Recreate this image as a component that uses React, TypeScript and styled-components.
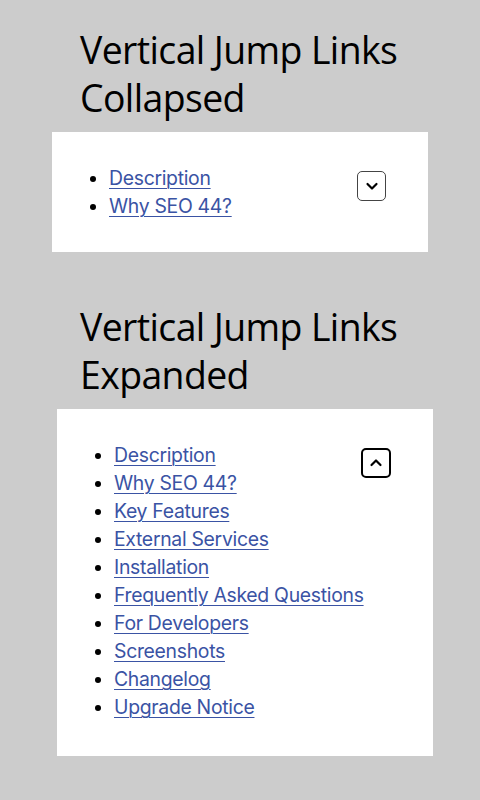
import React from "react"
import styled, { createGlobalStyle } from "styled-components"

const GlobalStyle = createGlobalStyle`
  html, body {
    margin: 0;
    padding: 0;
    background: #cccccc;
  }
`

const Page = styled.div`
  width: 480px;
  min-height: 800px;
  padding: 26px 0 0 52px;
  box-sizing: border-box;
  background: #cccccc;
`

const Title = styled.h2<{ $gap: number }>`
  margin: ${(p) => p.$gap}px 0 10px 28px;
  font-family: "Open Sans", "Liberation Sans", sans-serif;
  font-weight: 400;
  font-size: 37.4px;
  line-height: 48px;
  letter-spacing: -0.6px;
  color: #000;
`

const Panel = styled.div<{ $shift: number; $bottom: number }>`
  display: flex;
  align-items: flex-start;
  justify-content: space-between;
  width: 376px;
  margin-left: ${(p) => p.$shift}px;
  padding: 32px 42px ${(p) => p.$bottom}px 17px;
  box-sizing: border-box;
  background: #fff;
`

const List = styled.ul`
  flex: 1;
  min-width: 0;
  margin: 0;
  padding-left: 40px;
  font-family: Inter, "Noto Sans", sans-serif;
  font-size: 19.4px;
  line-height: 28px;
  color: #000;
`

const Item = styled.li`
  letter-spacing: -0.3px;
  white-space: nowrap;
`

const Link = styled.a`
  color: #3a53a4;
  text-decoration: underline;
  text-underline-offset: 3px;
  text-decoration-thickness: 1px;
`

const Toggle = styled.button<{ $open: boolean }>`
  flex: none;
  display: flex;
  align-items: center;
  justify-content: center;
  width: ${(p) => (p.$open ? 30 : 29)}px;
  height: 30px;
  margin-top: 7px;
  padding: 0;
  background: #fff;
  border: ${(p) => (p.$open ? "2px solid #000" : "1.5px solid #444")};
  border-radius: 5px;
  cursor: pointer;
`

const Chevron = ({ up }: { up: boolean }) => (
  <svg width="14" height="14" viewBox="0 0 14 14" fill="none">
    <path
      d={up ? "M2.5 9 L7 4.5 L11.5 9" : "M2.5 5 L7 9.5 L11.5 5"}
      stroke="#000"
      strokeWidth="2.2"
      strokeLinecap="round"
      strokeLinejoin="round"
    />
  </svg>
)

const short = ["Description", "Why SEO 44?"]
const full = [
  "Description",
  "Why SEO 44?",
  "Key Features",
  "External Services",
  "Installation",
  "Frequently Asked Questions",
  "For Developers",
  "Screenshots",
  "Changelog",
  "Upgrade Notice",
]

const JumpLinks = ({
  items,
  open,
  shift,
  bottom,
}: {
  items: string[]
  open: boolean
  shift: number
  bottom: number
}) => (
  <Panel $shift={shift} $bottom={bottom}>
    <List>
      {items.map((t) => (
        <Item key={t}>
          <Link href="#">{t}</Link>
        </Item>
      ))}
    </List>
    <Toggle $open={open} aria-label={open ? "Collapse" : "Expand"}>
      <Chevron up={open} />
    </Toggle>
  </Panel>
)

export default function App() {
  return (
    <Page>
      <GlobalStyle />
      <Title $gap={0}>Vertical Jump Links Collapsed</Title>
      <JumpLinks items={short} open={false} shift={0} bottom={32} />
      <Title $gap={51}>Vertical Jump Links Expanded</Title>
      <JumpLinks items={full} open={true} shift={5} bottom={35} />
    </Page>
  )
}
